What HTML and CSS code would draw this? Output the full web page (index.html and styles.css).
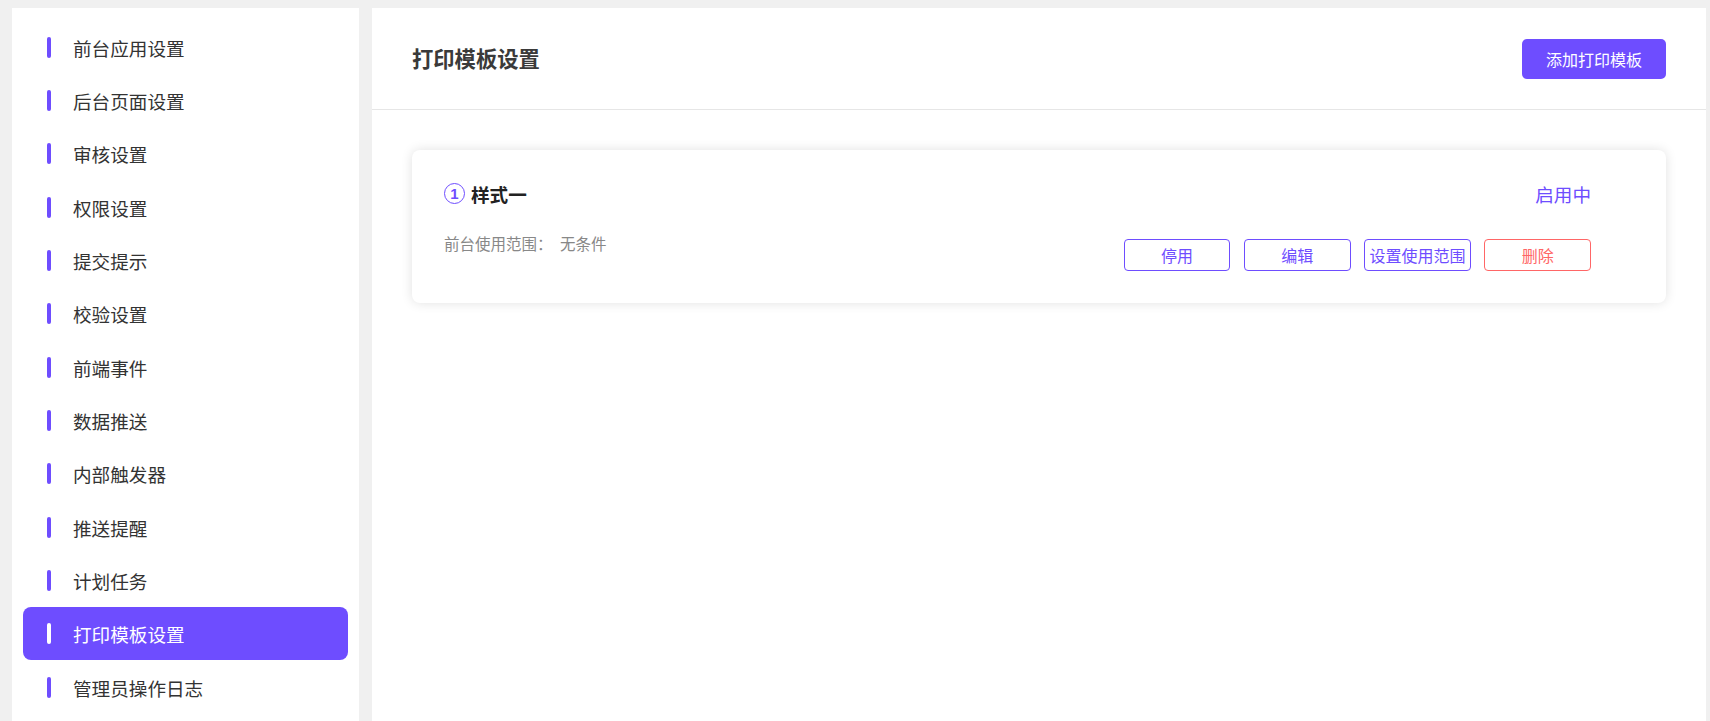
FILE: index.html
```html
<!DOCTYPE html>
<html lang="zh-CN">

<head>
    <meta charset="UTF-8">
    <meta name="viewport" content="width=device-width, initial-scale=1.0">
    <title>打印模板设置</title>
    <link rel="stylesheet" href="styles.css">
</head>

<body>
    <div class="layout">
        <ul class="side-menu">
            <li class="menu-item">前台应用设置</li>
            <li class="menu-item">后台页面设置</li>
            <li class="menu-item">审核设置</li>
            <li class="menu-item">权限设置</li>
            <li class="menu-item">提交提示</li>
            <li class="menu-item">校验设置</li>
            <li class="menu-item">前端事件</li>
            <li class="menu-item">数据推送</li>
            <li class="menu-item">内部触发器</li>
            <li class="menu-item">推送提醒</li>
            <li class="menu-item">计划任务</li>
            <li class="menu-item active">打印模板设置</li>
            <li class="menu-item">管理员操作日志</li>
        </ul>

        <div class="main">
            <div class="main-header">
                <h2 class="page-title">打印模板设置</h2>
                <button class="btn-primary">添加打印模板</button>
            </div>

            <div class="main-body">
                <div class="tpl-card">
                    <div class="tpl-top">
                        <div class="tpl-name">
                            <span class="tpl-index">1</span>
                            <span>样式一</span>
                        </div>
                        <div class="tpl-status">启用中</div>
                    </div>
                    <div class="tpl-bottom">
                        <div class="tpl-scope">
                            <span>前台使用范围：</span>
                            <span class="scope-value">无条件</span>
                        </div>
                        <div class="tpl-actions">
                            <button class="btn-line">停用</button>
                            <button class="btn-line">编辑</button>
                            <button class="btn-line">设置使用范围</button>
                            <button class="btn-line danger">删除</button>
                        </div>
                    </div>
                </div>
            </div>
        </div>
    </div>
</body>

</html>
```

FILE: styles.css
```css
* {
    margin: 0;
    padding: 0;
    box-sizing: border-box;
}

body {
    font-family: "Noto Sans CJK SC", "Noto Sans", sans-serif;
    background: #f0f0f0;
    height: 100vh;
    overflow: hidden;
}

.layout {
    display: flex;
    gap: 13px;
    height: 100vh;
    padding: 8px 4px 0 12px;
}

/* left menu */
.side-menu {
    list-style: none;
    width: 347px;
    flex-shrink: 0;
    background: #fff;
    padding: 12.5px 11px 0 11px;
}

.menu-item {
    display: flex;
    align-items: center;
    height: 53.33px;
    padding-left: 24px;
    font-size: 18.6px;
    color: #333;
    border-radius: 8px;
    cursor: pointer;
}

.menu-item::before {
    content: "";
    width: 4px;
    height: 21px;
    border-radius: 2px;
    background: #6e4dff;
    margin-right: 22px;
}

.menu-item.active {
    background: #6e4dff;
    color: #fff;
}

.menu-item.active::before {
    background: #fff;
}

/* main panel */
.main {
    flex: 1;
    background: #fff;
    display: flex;
    flex-direction: column;
}

.main-header {
    height: 102px;
    display: flex;
    align-items: center;
    justify-content: space-between;
    padding: 0 40px;
    border-bottom: 1px solid #e6e6e6;
}

.page-title {
    font-size: 21.3px;
    font-weight: 700;
    color: #3a3a3a;
    margin-top: -2px;
}

.btn-primary {
    width: 144px;
    height: 40px;
    border: none;
    border-radius: 5px;
    background: #6e4dff;
    color: #fff;
    font-family: inherit;
    font-size: 16px;
    cursor: pointer;
}

.main-body {
    padding: 40px;
}

.tpl-card {
    background: #fff;
    border-radius: 8px;
    box-shadow: 0 0 12px rgba(0, 0, 0, 0.12);
    padding: 27px 75px 32px 32px;
}

.tpl-top {
    display: flex;
    justify-content: space-between;
    align-items: center;
    height: 32px;
}

.tpl-name {
    display: flex;
    align-items: center;
    gap: 6px;
    font-size: 18.6px;
    font-weight: 700;
    color: #222;
}

.tpl-index {
    width: 21px;
    height: 21px;
    border: 1.5px solid #6e4dff;
    border-radius: 50%;
    color: #6e4dff;
    font-family: "Liberation Sans", Arial, sans-serif;
    font-size: 15px;
    font-weight: 700;
    display: flex;
    align-items: center;
    justify-content: center;
    line-height: 1;
}

.tpl-status {
    font-size: 18.6px;
    color: #6e4dff;
}

.tpl-bottom {
    display: flex;
    justify-content: space-between;
    align-items: flex-start;
    margin-top: 21px;
}

.tpl-scope {
    font-size: 15.5px;
    line-height: 26px;
    color: #888;
}

.scope-value {
    margin-left: 4px;
}

.tpl-actions {
    display: flex;
    gap: 13.5px;
    padding-top: 9px;
}

.btn-line {
    width: 106.7px;
    height: 31.5px;
    border: 1px solid #6e4dff;
    border-radius: 4px;
    background: #fff;
    color: #6e4dff;
    font-family: inherit;
    font-size: 16px;
    cursor: pointer;
}

.btn-line.danger {
    border-color: #ff6666;
    color: #ff6666;
}
```
